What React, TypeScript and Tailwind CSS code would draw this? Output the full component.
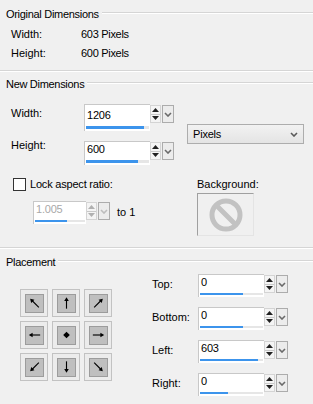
import React from 'react';

const font = "font-['Liberation_Sans',Arial,sans-serif]";

function Header({ title }: { title: string }) {
  return (
    <div className="flex items-center h-[16px]">
      <span className="pl-[6px] pr-[3px] tracking-[-0.3px]">{title}</span>
      <div className="flex-1 flex flex-col mt-[-2px]">
        <div className="h-px bg-[#d5d5d5]" />
        <div className="h-px bg-white" />
      </div>
    </div>
  );
}

function Rule() {
  return (
    <div>
      <div className="h-px bg-[#d5d5d5]" />
      <div className="h-px bg-white" />
    </div>
  );
}

function SpinBox({
  value,
  pct,
  boxW,
  boxH,
  disabled,
}: {
  value: string;
  pct: number;
  boxW: number;
  boxH: number;
  disabled?: boolean;
}) {
  const arrow = disabled ? '#b0b0b0' : '#202020';
  return (
    <div className="flex items-start">
      <div
        className="flex flex-col justify-end bg-white border-l border-t border-[#c8c8c8]"
        style={{ width: boxW, height: boxH }}
      >
        <div className={`pl-[2px] leading-[14px] tracking-[-0.2px] ${disabled ? 'text-[#a8a8a8]' : 'text-black'}`}>
          {value}
        </div>
        <div className="mt-[4px] mb-[2px] mx-[1px] h-[3px] bg-[#e6e6e6]">
          <div className="h-full bg-[#3c94ec]" style={{ width: `${pct}%` }} />
        </div>
      </div>
      <div className="mt-[1px] w-[11px] h-[18px] flex flex-col border border-[#d4d4d4] bg-[#f4f4f4]">
        <div className="flex-1 flex items-center justify-center border-b border-[#c8c8c8]">
          <svg width="7" height="4" viewBox="0 0 7 4">
            <path d="M0 4 L3.5 0 L7 4 Z" fill={arrow} />
          </svg>
        </div>
        <div className="flex-1 flex items-center justify-center">
          <svg width="7" height="4" viewBox="0 0 7 4">
            <path d="M0 0 L3.5 4 L7 0 Z" fill={arrow} />
          </svg>
        </div>
      </div>
      <div className="ml-[1px] mt-[1px] w-[12px] h-[18px] flex items-center justify-center border border-[#acacac] bg-[#ececec]">
        <svg width="8" height="5" viewBox="0 0 8 5">
          <path d="M1 1 L4 4 L7 1" fill="none" stroke={disabled ? '#bdbdbd' : '#6a6a6a'} strokeWidth="1.6" />
        </svg>
      </div>
    </div>
  );
}

type Dir = 'nw' | 'n' | 'ne' | 'w' | 'c' | 'e' | 'sw' | 's' | 'se';

function Arrow({ dir }: { dir: Dir }) {
  if (dir === 'c') {
    return (
      <svg width="18" height="18" viewBox="0 0 18 18">
        <path d="M9 5.5 L12.5 9 L9 12.5 L5.5 9 Z" fill="#000" />
      </svg>
    );
  }
  const angle: Record<string, number> = { n: 0, ne: 45, e: 90, se: 135, s: 180, sw: 225, w: 270, nw: 315 };
  const diag = dir.length === 2;
  const len = diag ? 6.5 : 6;
  return (
    <svg width="18" height="18" viewBox="0 0 18 18">
      <g transform={`rotate(${angle[dir]} 9 9)`}>
        <line x1="9" y1={9 + len} x2="9" y2={9 - len + 2} stroke="#000" strokeWidth="1.2" />
        <path d={`M6.6 ${9 - len + 4} L9 ${9 - len} L11.4 ${9 - len + 4} Z`} fill="#000" />
      </g>
    </svg>
  );
}

function PlaceButton({ dir }: { dir: Dir }) {
  return (
    <div className="w-[28px] h-[28px] flex items-center justify-center border border-[#c2c2c2] bg-[#ececec]">
      <div className="w-[19px] h-[19px] flex items-center justify-center border border-[#9c9c9c] bg-[#bfbfbf]">
        <Arrow dir={dir} />
      </div>
    </div>
  );
}

function FieldRow({ label, value, pct }: { label: string; value: string; pct: number }) {
  return (
    <div className="flex items-start">
      <div className="w-[46px] mt-[3px] leading-[14px]">{label}</div>
      <SpinBox value={value} pct={pct} boxW={66} boxH={23} />
    </div>
  );
}

export default function App() {
  const dirs: Dir[] = ['nw', 'n', 'ne', 'w', 'c', 'e', 'sw', 's', 'se'];
  return (
    <div className={`${font} w-[313px] h-[404px] bg-[#f0f0f0] text-[11px] text-black overflow-hidden`}>
      {/* Original Dimensions */}
      <div className="h-[70px] pt-[6px]">
        <Header title="Original Dimensions" />
        <div className="mt-[5px] flex flex-col gap-[5px] pl-[11px] leading-[14px]">
          <div className="flex">
            <span className="w-[70px]">Width:</span>
            <span className="tracking-[-0.3px]">603 Pixels</span>
          </div>
          <div className="flex">
            <span className="w-[70px]">Height:</span>
            <span className="tracking-[-0.3px]">600 Pixels</span>
          </div>
        </div>
      </div>

      {/* New Dimensions */}
      <div className="h-[177px]">
        <Rule />
        <div className="mt-[4px]">
          <Header title="New Dimensions" />
        </div>
        <div className="mt-[12px] flex pl-[11px]">
          <div className="flex flex-col gap-[10px]">
            <div className="flex items-start">
              <div className="w-[73px] mt-[2px] leading-[14px]">Width:</div>
              <SpinBox value="1206" pct={92} boxW={66} boxH={27} />
            </div>
            <div className="flex items-start">
              <div className="w-[73px] mt-[-3px] leading-[14px]">Height:</div>
              <SpinBox value="600" pct={82} boxW={66} boxH={24} />
            </div>
          </div>
          <div className="ml-[13px] mt-[20px] w-[117px] h-[20px] flex items-center justify-between px-[5px] border border-[#adadad] bg-gradient-to-b from-[#f2f2f2] to-[#e4e4e4]">
            <span className="tracking-[-0.2px]">Pixels</span>
            <svg width="8" height="5" viewBox="0 0 8 5">
              <path d="M1 1 L4 4 L7 1" fill="none" stroke="#5a5a5a" strokeWidth="1.6" />
            </svg>
          </div>
        </div>
        <div className="mt-[12px] flex">
          <div className="w-[197px]">
            <div className="flex items-center pl-[13px] h-[14px]">
              <div className="w-[13px] h-[13px] border border-[#333] bg-white" />
              <span className="ml-[4px] tracking-[-0.2px]">Lock aspect ratio:</span>
            </div>
            <div className="mt-[10px] pl-[33px] flex items-start">
              <SpinBox value="1.005" pct={63} boxW={53} boxH={23} disabled />
              <span className="ml-[7px] mt-[4px] leading-[14px]">to 1</span>
            </div>
          </div>
          <div className="flex flex-col">
            <span className="leading-[14px]">Background:</span>
            <div className="mt-[2px] w-[57px] h-[43px] flex items-center justify-center border-l border-t border-[#a0a0a0] border-r border-b border-r-[#e4e4e4] border-b-[#e4e4e4]">
              <svg width="34" height="34" viewBox="0 0 34 34">
                <circle cx="17" cy="17" r="14" fill="none" stroke="#c2c2c2" strokeWidth="5" />
                <line x1="7.5" y1="7.5" x2="26.5" y2="26.5" stroke="#c2c2c2" strokeWidth="5" />
              </svg>
            </div>
          </div>
        </div>
      </div>

      {/* Placement */}
      <div>
        <Rule />
        <div className="mt-[5px]">
          <Header title="Placement" />
        </div>
        <div className="mt-[4px] flex">
          <div className="ml-[20px] mt-[15px] grid grid-cols-3 gap-[4px] w-[92px] h-[92px]">
            {dirs.map((d) => (
              <PlaceButton key={d} dir={d} />
            ))}
          </div>
          <div className="ml-[40px] flex flex-col gap-[10px]">
            <FieldRow label="Top:" value="0" pct={69} />
            <FieldRow label="Bottom:" value="0" pct={69} />
            <FieldRow label="Left:" value="603" pct={92} />
            <FieldRow label="Right:" value="0" pct={45} />
          </div>
        </div>
      </div>
    </div>
  );
}
